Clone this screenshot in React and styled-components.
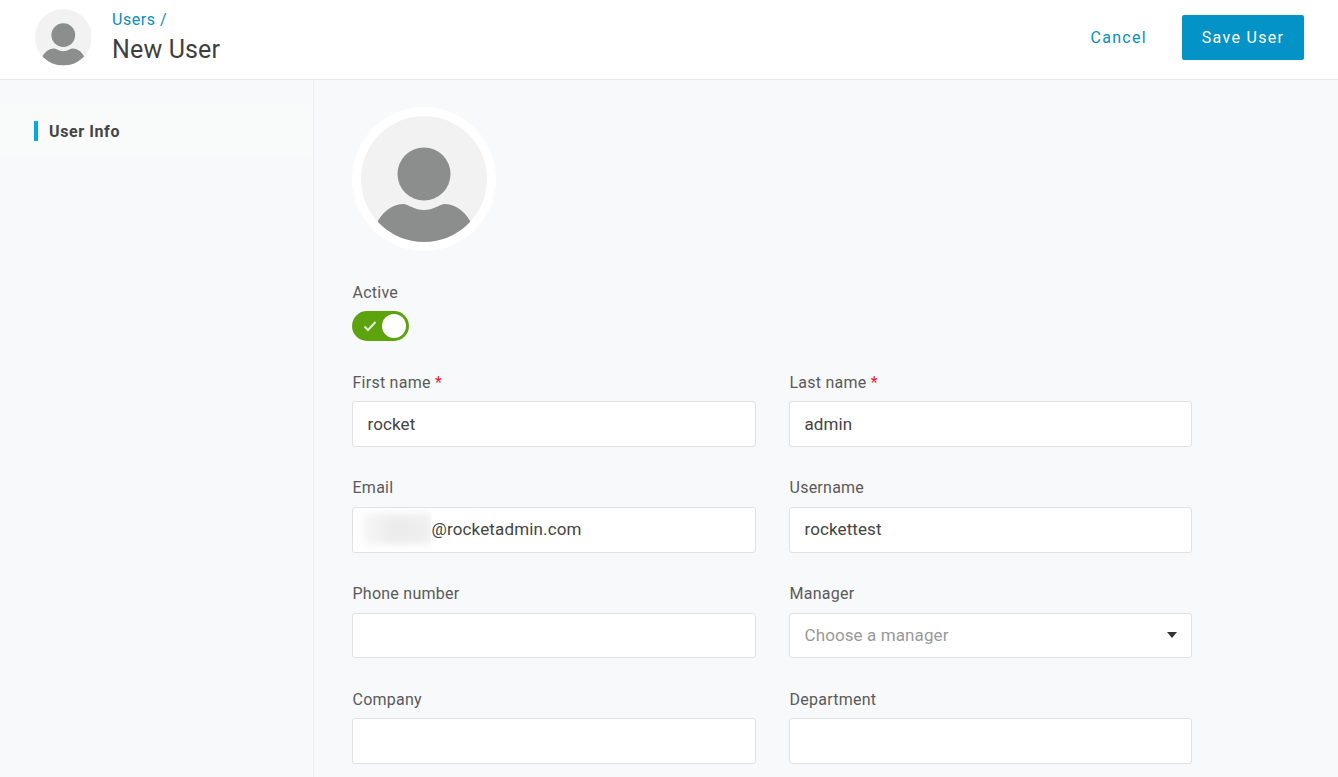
import React from "react";
import styled, { createGlobalStyle } from "styled-components";

const GlobalStyle = createGlobalStyle`
  html, body {
    margin: 0;
    height: 100%;
    overflow: hidden;
    background: #f8f9fb;
    font-family: Roboto, "Liberation Sans", sans-serif;
  }
  * { box-sizing: border-box; }
`;

const Page = styled.div`
  display: flex;
  flex-direction: column;
  height: 777px;
  overflow: hidden;
`;

const Header = styled.header`
  display: flex;
  align-items: center;
  justify-content: space-between;
  flex: 0 0 80px;
  padding: 0 34px 4px 34.5px;
  background: #fff;
  border-bottom: 1px solid #e6e8eb;
`;

const TitleGroup = styled.div`
  display: flex;
  align-items: center;
  gap: 20.9px;
`;

const Crumbs = styled.div`
  display: flex;
  flex-direction: column;
  margin-top: -1px;
`;

const Crumb = styled.a`
  font-size: 16px;
  line-height: 20px;
  color: #0b8dbd;
  letter-spacing: 0.55px;
`;

const Title = styled.h1`
  margin: 5px 0 0;
  font-size: 25px;
  line-height: 30px;
  font-weight: 400;
  letter-spacing: 0.15px;
  color: #3f3f3f;
`;

const Actions = styled.div`
  display: flex;
  align-items: center;
  gap: 35px;
`;

const CancelButton = styled.button`
  padding: 0;
  border: none;
  background: none;
  font: inherit;
  font-size: 16px;
  letter-spacing: 1.3px;
  color: #0b8dbd;
`;

const SaveButton = styled.button`
  width: 122px;
  height: 45px;
  padding: 0;
  border: none;
  border-radius: 2px;
  background: #0393c6;
  color: #fff;
  font: inherit;
  font-size: 16px;
  letter-spacing: 1.3px;
`;

const Body = styled.div`
  display: flex;
  flex: 1;
  min-height: 0;
`;

const Sidebar = styled.nav`
  flex: 0 0 314px;
  padding-top: 25px;
  border-right: 1px solid #eceef0;
`;

const NavItem = styled.div`
  display: flex;
  align-items: center;
  height: 51px;
  padding-left: 34px;
  background: #f9fbfa;
`;

const NavLabel = styled.span`
  height: 20px;
  padding: 1px 0 0 11px;
  border-left: 4px solid #00a9e0;
  font-size: 16px;
  line-height: 20px;
  font-weight: 700;
  letter-spacing: 0.6px;
  color: #444;
`;

const Main = styled.main`
  flex: 1;
  padding: 27px 0 0 38px;
`;

const AvatarRing = styled.div`
  width: 144px;
  height: 144px;
  padding: 9px;
  border-radius: 50%;
  background: #fff;
`;

const SmallAvatar = styled.div`
  width: 56.6px;
  height: 56.6px;
`;

const Form = styled.div`
  display: grid;
  grid-template-columns: 404px 403px;
  column-gap: 33px;
  row-gap: 31.3px;
  margin-top: 32px;
`;

const ActiveField = styled.div`
  grid-column: 1 / -1;
  margin-bottom: 0.3px;
`;

const Field = styled.div`
  display: flex;
  flex-direction: column;
`;

const Label = styled.label`
  display: block;
  margin-bottom: ${(p) => p.$gap || 8.7}px;
  padding-left: 0.5px;
  font-size: 16px;
  line-height: 20px;
  letter-spacing: 0.25px;
  color: #5a5a5a;
`;

const Required = styled.span`
  color: #f01b2d;
`;

const Switch = styled.div`
  display: flex;
  align-items: center;
  justify-content: space-between;
  width: 57px;
  height: 30px;
  padding: 0 2px 0 11px;
  border-radius: 15px;
  background: #5da30d;
`;

const Knob = styled.span`
  width: 24px;
  height: 24px;
  margin-right: 1px;
  border-radius: 50%;
  background: #fff;
`;

const InputBox = styled.div`
  display: flex;
  align-items: center;
  justify-content: space-between;
  height: 45.67px;
  padding: 0 14.5px ${(p) => (p.$raised ? 1.5 : 0)}px;
  background: #fff;
  border: 1px solid #dfe1e2;
  border-radius: 3px;
  font-size: 17px;
  letter-spacing: 0.1px;
  color: ${(p) => (p.$placeholder ? "#999" : "#444")};
`;

const BlurredName = styled.span`
  display: inline-block;
  width: 70px;
  height: 30px;
  margin-left: -6px;
  background: linear-gradient(90deg, #f6f7f6, #eaebea 45%, #eeefee);
  filter: blur(4px);
  clip-path: inset(-8px 0 -8px -8px);
`;

const EmailValue = styled.span`
  display: flex;
  align-items: center;
  letter-spacing: 0.15px;
`;

const Caret = styled.span`
  width: 0;
  height: 0;
  border-left: 5.5px solid transparent;
  border-right: 5.5px solid transparent;
  border-top: 6px solid #333;
`;

// same person drawing in the header and the big avatar, ids differ per use
const PersonIcon = ({ id }) => (
  <svg viewBox="0 0 126 126" width="100%" height="100%" style={{ display: "block" }}>
    <defs>
      <clipPath id={id}>
        <circle cx="63" cy="63" r="63" />
      </clipPath>
    </defs>
    <circle cx="63" cy="63" r="63" fill="#f2f2f2" />
    <circle cx="63" cy="58" r="26.5" fill="#8c8e8d" />
    <path
      clipPath={`url(#${id})`}
      d="M13 112 C20 97 30 88 42 88 C48 88 52 94 63 94 C74 94 78 88 84 88 C96 88 106 97 113 112 L113 126 L13 126 Z"
      fill="#8c8e8d"
    />
  </svg>
);

const CheckIcon = () => (
  <svg width="14" height="12" viewBox="0 0 14 12" fill="none">
    <path d="M1.5 6.5 L5 10 L12.5 2" stroke="#e8f2dc" strokeWidth="2" />
  </svg>
);

const TextField = ({ label, required, value, raised }) => (
  <Field>
    <Label>
      {label}
      {required && <Required> *</Required>}
    </Label>
    <InputBox $raised={raised}>{value}</InputBox>
  </Field>
);

export default function App() {
  return (
    <Page>
      <GlobalStyle />
      <Header>
        <TitleGroup>
          <SmallAvatar>
            <PersonIcon id="smallAvatarClip" />
          </SmallAvatar>
          <Crumbs>
            <Crumb>Users /</Crumb>
            <Title>New User</Title>
          </Crumbs>
        </TitleGroup>
        <Actions>
          <CancelButton>Cancel</CancelButton>
          <SaveButton>Save User</SaveButton>
        </Actions>
      </Header>
      <Body>
        <Sidebar>
          <NavItem>
            <NavLabel>User Info</NavLabel>
          </NavItem>
        </Sidebar>
        <Main>
          <AvatarRing>
            <PersonIcon id="bigAvatarClip" />
          </AvatarRing>
          <Form>
            <ActiveField>
              <Label $gap={8}>Active</Label>
              <Switch>
                <CheckIcon />
                <Knob />
              </Switch>
            </ActiveField>
            <TextField label="First name" required value="rocket" />
            <TextField label="Last name" required value="admin" />
            <Field>
              <Label>Email</Label>
              <InputBox $raised>
                <EmailValue>
                  <BlurredName />
                  @rocketadmin.com
                </EmailValue>
              </InputBox>
            </Field>
            <TextField label="Username" value="rockettest" raised />
            <TextField label="Phone number" />
            <Field>
              <Label>Manager</Label>
              <InputBox $placeholder>
                Choose a manager
                <Caret />
              </InputBox>
            </Field>
            <TextField label="Company" />
            <TextField label="Department" />
          </Form>
        </Main>
      </Body>
    </Page>
  );
}
